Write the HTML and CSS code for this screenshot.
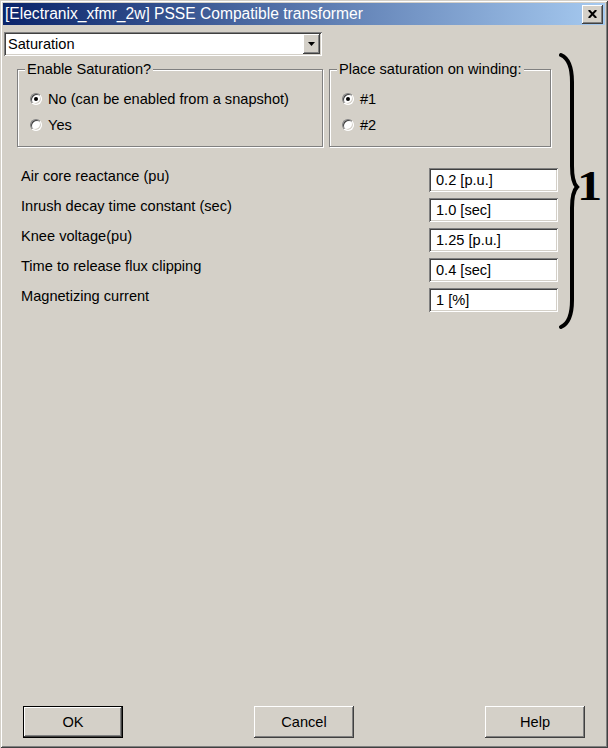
FILE: index.html
```html
<!DOCTYPE html>
<html>
<head>
<meta charset="utf-8">
<link rel="stylesheet" href="styles.css">
</head>
<body>
<div class="window">
  <div class="titlebar">
    <span class="title">[Electranix_xfmr_2w] PSSE Compatible transformer</span>
    <span class="close raised"><svg width="9" height="8" viewBox="0 0 9 8"><path d="M0.8 0 L8.2 8 M8.2 0 L0.8 8" stroke="#000" stroke-width="2"/></svg></span>
  </div>
  <div class="content">
    <div class="select sunken">
      <span class="select-text">Saturation</span>
      <span class="select-btn raised"><svg width="7" height="4" viewBox="0 0 7 4"><path d="M0 0 H7 L3.5 4 Z" fill="#000"/></svg></span>
    </div>
    <div class="groups">
      <fieldset class="group g1">
        <legend>Enable Saturation?</legend>
        <div class="radios">
          <label class="radio"><span class="rb checked"></span>No (can be enabled from a snapshot)</label>
          <label class="radio"><span class="rb"></span>Yes</label>
        </div>
      </fieldset>
      <fieldset class="group g2">
        <legend>Place saturation on winding:</legend>
        <div class="radios">
          <label class="radio"><span class="rb checked"></span>#1</label>
          <label class="radio"><span class="rb"></span>#2</label>
        </div>
      </fieldset>
    </div>
    <div class="fields">
      <span class="flabel">Air core reactance (pu)</span><span class="input sunken">0.2 [p.u.]</span>
      <span class="flabel">Inrush decay time constant (sec)</span><span class="input sunken">1.0 [sec]</span>
      <span class="flabel">Knee voltage(pu)</span><span class="input sunken">1.25 [p.u.]</span>
      <span class="flabel">Time to release flux clipping</span><span class="input sunken">0.4 [sec]</span>
      <span class="flabel">Magnetizing current</span><span class="input sunken">1 [%]</span>
    </div>
    <svg class="brace" width="26" height="278" viewBox="0 0 26 278"><path d="M5,3 C12,6 16,14 16,30 L16,114 C16,126 18,132 21,135 C18,138 16,144 16,156 L16,248 C16,264 12,272 5,275" fill="none" stroke="#000" stroke-width="4" stroke-linecap="round"/></svg>
    <span class="marker">1</span>
  </div>
  <div class="footer">
    <span class="btn raised default">OK</span>
    <span class="btn raised">Cancel</span>
    <span class="btn raised">Help</span>
  </div>
</div>
</body>
</html>
```
FILE: styles.css
```css
* { box-sizing: border-box; }
html, body { margin: 0; padding: 0; }
body {
  width: 608px;
  height: 748px;
  background: #D4D0C8;
  font-family: "Liberation Sans", Arial, sans-serif;
  font-size: 14.6px;
  color: #000;
  overflow: hidden;
}
.window {
  width: 608px;
  height: 748px;
  display: flex;
  flex-direction: column;
  padding: 3px;
  background: #D4D0C8;
  box-shadow: inset 1px 1px 0 #D4D0C8, inset -1px -1px 0 #404040, inset 2px 2px 0 #fff, inset -2px -2px 0 #808080;
}
.raised {
  background: #D4D0C8;
  box-shadow: inset -1px -1px 0 #404040, inset 1px 1px 0 #fff, inset -2px -2px 0 #808080, inset 2px 2px 0 #D4D0C8;
}
.sunken {
  background: #fff;
  box-shadow: inset 1px 1px 0 #808080, inset -1px -1px 0 #fff, inset 2px 2px 0 #404040, inset -2px -2px 0 #D4D0C8;
}
.titlebar {
  height: 22px;
  flex: none;
  display: flex;
  align-items: center;
  justify-content: space-between;
  padding: 0 2px 0 2px;
  background: linear-gradient(to right, #0A246A, #A6CAF0);
  color: #fff;
}
.title { font-size: 15.6px; white-space: nowrap; line-height: 18px; }
.close {
  width: 21px;
  height: 19px;
  display: flex;
  align-items: center;
  justify-content: center;
}
.close svg { display: block; }
.content {
  flex: 1;
  position: relative;
  padding: 7px 0 0 1px;
}
.select {
  width: 318px;
  height: 24px;
  display: flex;
  align-items: center;
  justify-content: space-between;
  padding: 2px 2px 2px 4px;
}
.select-text { line-height: 18px; }
.select-btn {
  width: 17px;
  height: 20px;
  display: flex;
  align-items: center;
  justify-content: center;
}
.select-btn svg { display: block; }
.groups {
  display: flex;
  gap: 6px;
  margin: 5px 0 0 13px;
}
.group {
  margin: 0;
  padding: 0;
  border: 1px solid #808080;
  box-shadow: 1px 1px 0 #fff, inset 1px 1px 0 #fff;
  height: 86px;
}
.g1 { width: 306px; }
.g2 { width: 222px; }
.group legend {
  margin-left: 7px;
  padding: 0 2px;
  line-height: 17px;
  background: #D4D0C8;
}
.radios {
  padding: 8px 0 0 12px;
  display: flex;
  flex-direction: column;
}
.radio {
  display: flex;
  align-items: center;
  gap: 6px;
  height: 26px;
}
.rb {
  width: 12px;
  height: 12px;
  flex: none;
  border-radius: 50%;
  background: #fff;
  border: 1px solid;
  border-color: #808080 #fff #fff #808080;
  box-shadow: inset 1px 1px 0 #404040, inset -1px -1px 0 #D4D0C8;
  position: relative;
}
.rb.checked::after {
  content: "";
  position: absolute;
  left: 3px;
  top: 3px;
  width: 4px;
  height: 4px;
  border-radius: 50%;
  background: #000;
}
.fields {
  display: grid;
  grid-template-columns: 408px 129px;
  row-gap: 6px;
  margin: 21px 0 0 17px;
  align-items: start;
}
.flabel { line-height: 16px; }
.input {
  height: 24px;
  line-height: 24px;
  padding-left: 7px;
}
.brace {
  position: absolute;
  left: 553px;
  top: 27px;
}
.marker {
  position: absolute;
  left: 574px;
  top: 140px;
  font-family: "Liberation Serif", "Times New Roman", serif;
  font-weight: bold;
  font-size: 42px;
  line-height: 42px;
  transform: scaleX(1.2);
  transform-origin: left top;
}
.footer {
  flex: none;
  display: flex;
  justify-content: space-between;
  padding: 0 20px 7px 20px;
}
.btn {
  width: 100px;
  height: 32px;
  display: flex;
  align-items: center;
  justify-content: center;
}
.btn.default { border: 1px solid #000; }
```
